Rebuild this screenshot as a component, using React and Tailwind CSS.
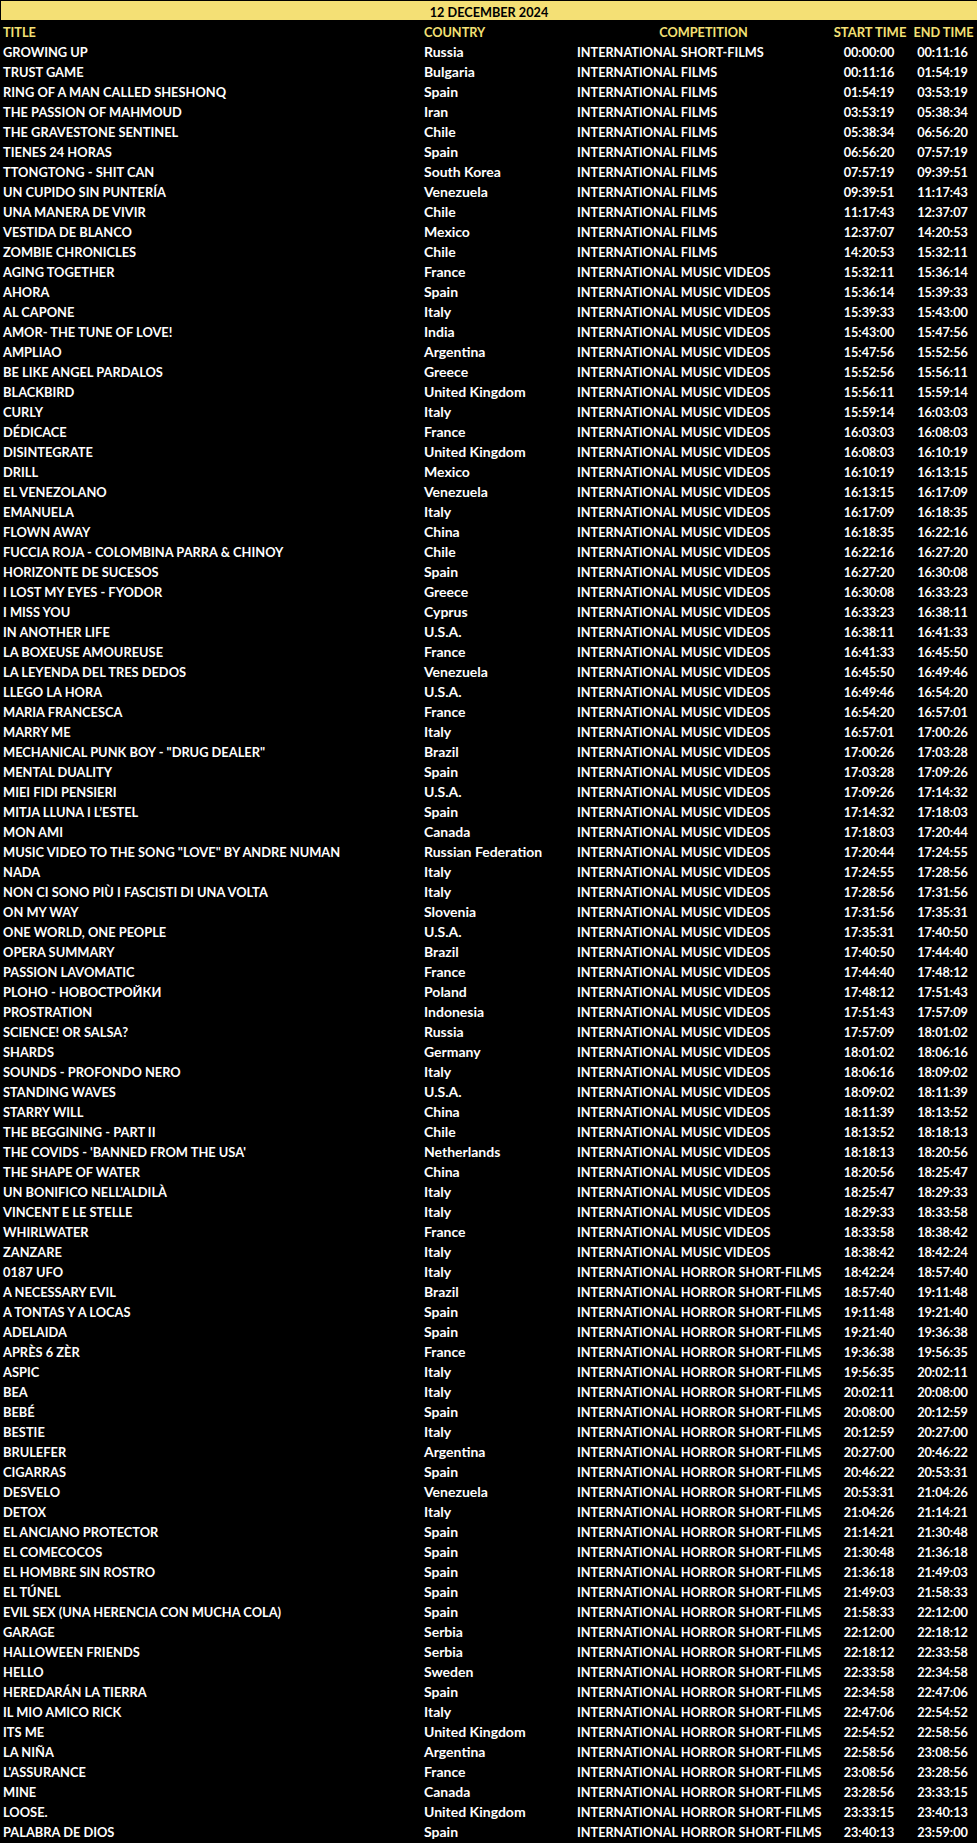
import React from 'react';

const SHORT = 'INTERNATIONAL SHORT-FILMS';
const FILMS = 'INTERNATIONAL FILMS';
const MUSIC = 'INTERNATIONAL MUSIC VIDEOS';
const HORROR = 'INTERNATIONAL HORROR SHORT-FILMS';

// title, country, competition, end time (start time is the previous row's end)
const schedule = [
  ['GROWING UP', 'Russia', SHORT, '00:11:16'],
  ['TRUST GAME', 'Bulgaria', FILMS, '01:54:19'],
  ['RING OF A MAN CALLED SHESHONQ', 'Spain', FILMS, '03:53:19'],
  ['THE PASSION OF MAHMOUD', 'Iran', FILMS, '05:38:34'],
  ['THE GRAVESTONE SENTINEL', 'Chile', FILMS, '06:56:20'],
  ['TIENES 24 HORAS', 'Spain', FILMS, '07:57:19'],
  ['TTONGTONG - SHIT CAN', 'South Korea', FILMS, '09:39:51'],
  ['UN CUPIDO SIN PUNTERÍA', 'Venezuela', FILMS, '11:17:43'],
  ['UNA MANERA DE VIVIR', 'Chile', FILMS, '12:37:07'],
  ['VESTIDA DE BLANCO', 'Mexico', FILMS, '14:20:53'],
  ['ZOMBIE CHRONICLES', 'Chile', FILMS, '15:32:11'],
  ['AGING TOGETHER', 'France', MUSIC, '15:36:14'],
  ['AHORA', 'Spain', MUSIC, '15:39:33'],
  ['AL CAPONE', 'Italy', MUSIC, '15:43:00'],
  ['AMOR- THE TUNE OF LOVE!', 'India', MUSIC, '15:47:56'],
  ['AMPLIAO', 'Argentina', MUSIC, '15:52:56'],
  ['BE LIKE ANGEL PARDALOS', 'Greece', MUSIC, '15:56:11'],
  ['BLACKBIRD', 'United Kingdom', MUSIC, '15:59:14'],
  ['CURLY', 'Italy', MUSIC, '16:03:03'],
  ['DÉDICACE', 'France', MUSIC, '16:08:03'],
  ['DISINTEGRATE', 'United Kingdom', MUSIC, '16:10:19'],
  ['DRILL', 'Mexico', MUSIC, '16:13:15'],
  ['EL VENEZOLANO', 'Venezuela', MUSIC, '16:17:09'],
  ['EMANUELA', 'Italy', MUSIC, '16:18:35'],
  ['FLOWN AWAY', 'China', MUSIC, '16:22:16'],
  ['FUCCIA ROJA - COLOMBINA PARRA & CHINOY', 'Chile', MUSIC, '16:27:20'],
  ['HORIZONTE DE SUCESOS', 'Spain', MUSIC, '16:30:08'],
  ['I LOST MY EYES - FYODOR', 'Greece', MUSIC, '16:33:23'],
  ['I MISS YOU', 'Cyprus', MUSIC, '16:38:11'],
  ['IN ANOTHER LIFE', 'U.S.A.', MUSIC, '16:41:33'],
  ['LA BOXEUSE AMOUREUSE', 'France', MUSIC, '16:45:50'],
  ['LA LEYENDA DEL TRES DEDOS', 'Venezuela', MUSIC, '16:49:46'],
  ['LLEGO LA HORA', 'U.S.A.', MUSIC, '16:54:20'],
  ['MARIA FRANCESCA', 'France', MUSIC, '16:57:01'],
  ['MARRY ME', 'Italy', MUSIC, '17:00:26'],
  ['MECHANICAL PUNK BOY - "DRUG DEALER"', 'Brazil', MUSIC, '17:03:28'],
  ['MENTAL DUALITY', 'Spain', MUSIC, '17:09:26'],
  ['MIEI FIDI PENSIERI', 'U.S.A.', MUSIC, '17:14:32'],
  ['MITJA LLUNA I L’ESTEL', 'Spain', MUSIC, '17:18:03'],
  ['MON AMI', 'Canada', MUSIC, '17:20:44'],
  ['MUSIC VIDEO TO THE SONG "LOVE" BY ANDRE NUMAN', 'Russian Federation', MUSIC, '17:24:55'],
  ['NADA', 'Italy', MUSIC, '17:28:56'],
  ['NON CI SONO PIÙ I FASCISTI DI UNA VOLTA', 'Italy', MUSIC, '17:31:56'],
  ['ON MY WAY', 'Slovenia', MUSIC, '17:35:31'],
  ['ONE WORLD, ONE PEOPLE', 'U.S.A.', MUSIC, '17:40:50'],
  ['OPERA SUMMARY', 'Brazil', MUSIC, '17:44:40'],
  ['PASSION LAVOMATIC', 'France', MUSIC, '17:48:12'],
  ['PLOHO - НОВОСТРОЙКИ', 'Poland', MUSIC, '17:51:43'],
  ['PROSTRATION', 'Indonesia', MUSIC, '17:57:09'],
  ['SCIENCE! OR SALSA?', 'Russia', MUSIC, '18:01:02'],
  ['SHARDS', 'Germany', MUSIC, '18:06:16'],
  ['SOUNDS - PROFONDO NERO', 'Italy', MUSIC, '18:09:02'],
  ['STANDING WAVES', 'U.S.A.', MUSIC, '18:11:39'],
  ['STARRY WILL', 'China', MUSIC, '18:13:52'],
  ['THE BEGGINING - PART II', 'Chile', MUSIC, '18:18:13'],
  ["THE COVIDS - 'BANNED FROM THE USA'", 'Netherlands', MUSIC, '18:20:56'],
  ['THE SHAPE OF WATER', 'China', MUSIC, '18:25:47'],
  ["UN BONIFICO NELL'ALDILÀ", 'Italy', MUSIC, '18:29:33'],
  ['VINCENT E LE STELLE', 'Italy', MUSIC, '18:33:58'],
  ['WHIRLWATER', 'France', MUSIC, '18:38:42'],
  ['ZANZARE', 'Italy', MUSIC, '18:42:24'],
  ['0187 UFO', 'Italy', HORROR, '18:57:40'],
  ['A NECESSARY EVIL', 'Brazil', HORROR, '19:11:48'],
  ['A TONTAS Y A LOCAS', 'Spain', HORROR, '19:21:40'],
  ['ADELAIDA', 'Spain', HORROR, '19:36:38'],
  ['APRÈS 6 ZÈR', 'France', HORROR, '19:56:35'],
  ['ASPIC', 'Italy', HORROR, '20:02:11'],
  ['BEA', 'Italy', HORROR, '20:08:00'],
  ['BEBÉ', 'Spain', HORROR, '20:12:59'],
  ['BESTIE', 'Italy', HORROR, '20:27:00'],
  ['BRULEFER', 'Argentina', HORROR, '20:46:22'],
  ['CIGARRAS', 'Spain', HORROR, '20:53:31'],
  ['DESVELO', 'Venezuela', HORROR, '21:04:26'],
  ['DETOX', 'Italy', HORROR, '21:14:21'],
  ['EL ANCIANO PROTECTOR', 'Spain', HORROR, '21:30:48'],
  ['EL COMECOCOS', 'Spain', HORROR, '21:36:18'],
  ['EL HOMBRE SIN ROSTRO', 'Spain', HORROR, '21:49:03'],
  ['EL TÚNEL', 'Spain', HORROR, '21:58:33'],
  ['EVIL SEX (UNA HERENCIA CON MUCHA COLA)', 'Spain', HORROR, '22:12:00'],
  ['GARAGE', 'Serbia', HORROR, '22:18:12'],
  ['HALLOWEEN FRIENDS', 'Serbia', HORROR, '22:33:58'],
  ['HELLO', 'Sweden', HORROR, '22:34:58'],
  ['HEREDARÁN LA TIERRA', 'Spain', HORROR, '22:47:06'],
  ['IL MIO AMICO RICK', 'Italy', HORROR, '22:54:52'],
  ['ITS ME', 'United Kingdom', HORROR, '22:58:56'],
  ['LA NIÑA', 'Argentina', HORROR, '23:08:56'],
  ["L'ASSURANCE", 'France', HORROR, '23:28:56'],
  ['MINE', 'Canada', HORROR, '23:33:15'],
  ['LOOSE.', 'United Kingdom', HORROR, '23:40:13'],
  ['PALABRA DE DIOS', 'Spain', HORROR, '23:59:00'],
];

const rowClass = 'grid grid-cols-[424px_153px_253px_80px_67px] items-baseline h-5 leading-5 whitespace-nowrap';

const App = () => {
  return (
    <div className="w-[977px] min-h-[1843px] bg-black pt-px pb-[3px] text-[12.7px] font-bold text-white font-['Lato','Noto_Sans',sans-serif]">
      <div className="ml-px h-[19px] bg-[#f4e075] text-center text-black leading-[22px]">12 DECEMBER 2024</div>

      <div className={`${rowClass} pt-0.5 box-content text-[#f4e075]`}>
        <div className="pl-[3px]">TITLE</div>
        <div>COUNTRY</div>
        <div className="text-center">COMPETITION</div>
        <div className="text-center text-[13px]">START TIME</div>
        <div className="text-center">END TIME</div>
      </div>

      {schedule.map(([title, country, competition, end], index) => (
        <div key={title} className={rowClass}>
          <div className="pl-[3px] text-[12.85px]">{title}</div>
          <div className="text-[14px]">{country}</div>
          <div>{competition}</div>
          <div className="pr-0.5 text-center">{index === 0 ? '00:00:00' : schedule[index - 1][3]}</div>
          <div className="pr-0.5 text-center">{end}</div>
        </div>
      ))}
    </div>
  );
};

export default App;
